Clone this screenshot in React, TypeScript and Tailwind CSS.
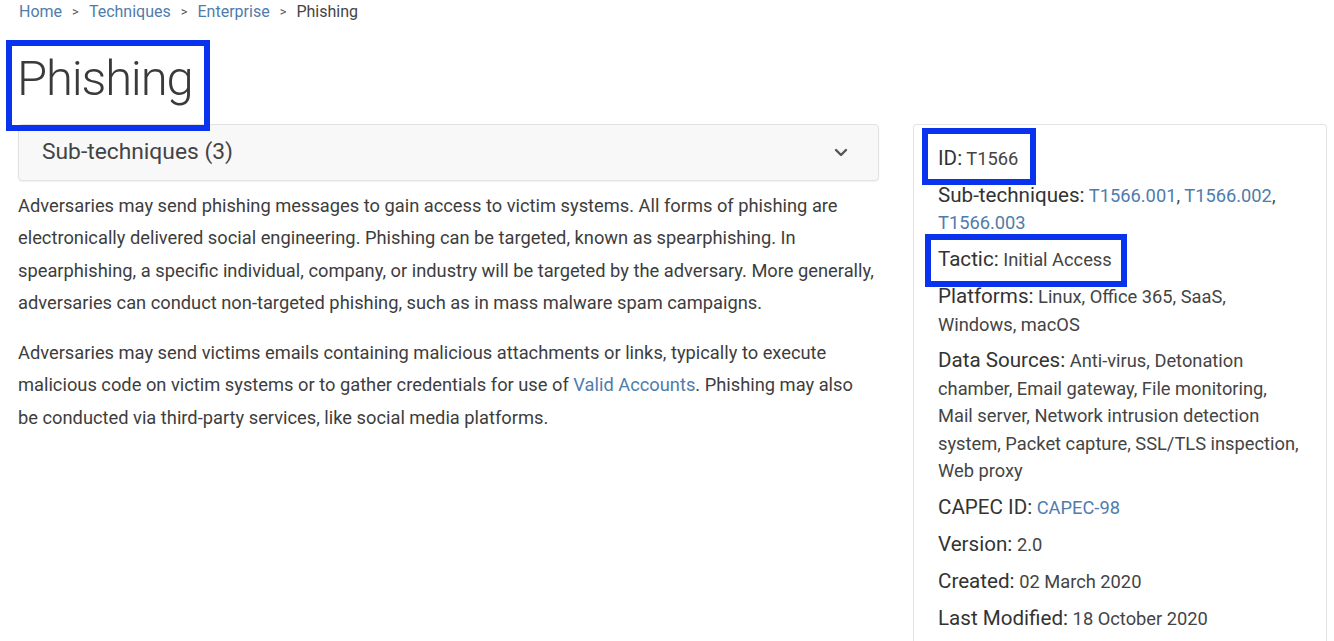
import React from 'react';

const linkCls = 'text-[#4f7cac]';

function Row({ label, children }: { label: string; children: React.ReactNode }) {
  return (
    <div className="mb-[9.5px] text-[18.3px] leading-[27.4px] text-[#444]">
      <span className="text-[20.6px] leading-[27.4px] text-[#333]">{label}:</span> {children}
    </div>
  );
}

export default function App() {
  return (
    <div className="relative flex h-[641px] w-full flex-col overflow-hidden bg-white font-['Roboto',sans-serif] text-[#333]">
      {/* breadcrumb */}
      <nav className="flex items-center gap-[10px] pl-[19px] pt-[2px] text-[16px] leading-[20px]">
        <span className={linkCls}>Home</span>
        <span className="text-[13px] text-[#555]">&gt;</span>
        <span className={linkCls}>Techniques</span>
        <span className="text-[13px] text-[#555]">&gt;</span>
        <span className={linkCls}>Enterprise</span>
        <span className="text-[13px] text-[#555]">&gt;</span>
        <span className="text-[#444]">Phishing</span>
      </nav>

      <h1 className="pl-[17px] pt-[34px] text-[49px] font-light leading-[46px] tracking-[-1.2px] text-[#3a3a3a]">Phishing</h1>

      <div className="flex flex-1 gap-[34px] pl-[18px] pr-[7px] pt-[22px]">
        {/* left column */}
        <div className="w-[861px] shrink-0">
          <div className="flex h-[57px] items-center justify-between rounded-[4px] border border-[#e2e2e2] bg-[#f8f8f8] pl-[23px] pr-[30px] shadow-[0_1px_2px_rgba(0,0,0,0.06)]">
            <span className="text-[22.8px] text-[#444]">Sub-techniques (3)</span>
            <svg width="14" height="9" viewBox="0 0 14 9" fill="none">
              <path d="M2 2l5 5 5-5" stroke="#555" strokeWidth="2.4" strokeLinecap="round" strokeLinejoin="round" />
            </svg>
          </div>
          <div className="pt-[9px] text-[18.3px] leading-[32.3px] text-[#3d3d3d]">
            <p>
              Adversaries may send phishing messages to gain access to victim systems. All forms of phishing are
              electronically delivered social engineering. Phishing can be targeted, known as spearphishing. In
              spearphishing, a specific individual, company, or industry will be targeted by the adversary. More generally,
              adversaries can conduct non-targeted phishing, such as in mass malware spam campaigns.
            </p>
            <p className="mt-[18px]">
              Adversaries may send victims emails containing malicious attachments or links, typically to execute
              malicious code on victim systems or to gather credentials for use of{' '}
              <span className={linkCls}>Valid Accounts</span>. Phishing may also
              <br />
              be conducted via third-party services, like social media platforms.
            </p>
          </div>
        </div>

        {/* right card */}
        <div className="flex-1 rounded-t-[4px] border border-b-0 border-[#e4e4e4] pl-[24px] pr-[23px] pt-[20px]">
          <Row label="ID">T1566</Row>
          <Row label="Sub-techniques">
            {' '}
            <span className={linkCls}>T1566.001</span>, <span className={linkCls}>T1566.002</span>,{' '}
            <span className={linkCls}>T1566.003</span>
          </Row>
          <Row label="Tactic">Initial Access</Row>
          <Row label="Platforms">Linux, Office 365, SaaS, Windows, macOS</Row>
          <Row label="Data Sources">
            Anti-virus, Detonation chamber, Email gateway, File monitoring, Mail server, Network intrusion detection
            system, Packet capture, SSL/TLS inspection, Web proxy
          </Row>
          <Row label="CAPEC ID">
            <span className={linkCls}>CAPEC-98</span>
          </Row>
          <Row label="Version">2.0</Row>
          <Row label="Created">02 March 2020</Row>
          <Row label="Last Modified">18 October 2020</Row>
        </div>
      </div>
      <div className="h-[3px] shrink-0 border-t border-[#e6e6e6]" />

      {/* annotation boxes */}
      <div className="absolute left-[6px] top-[40px] h-[91px] w-[204px] border-[6px] border-[#0a33ee]" />
      <div className="absolute left-[922px] top-[128px] h-[57px] w-[114px] border-[6px] border-[#0a33ee]" />
      <div className="absolute left-[925px] top-[234px] h-[53px] w-[202px] border-[6px] border-[#0a33ee]" />
    </div>
  );
}
